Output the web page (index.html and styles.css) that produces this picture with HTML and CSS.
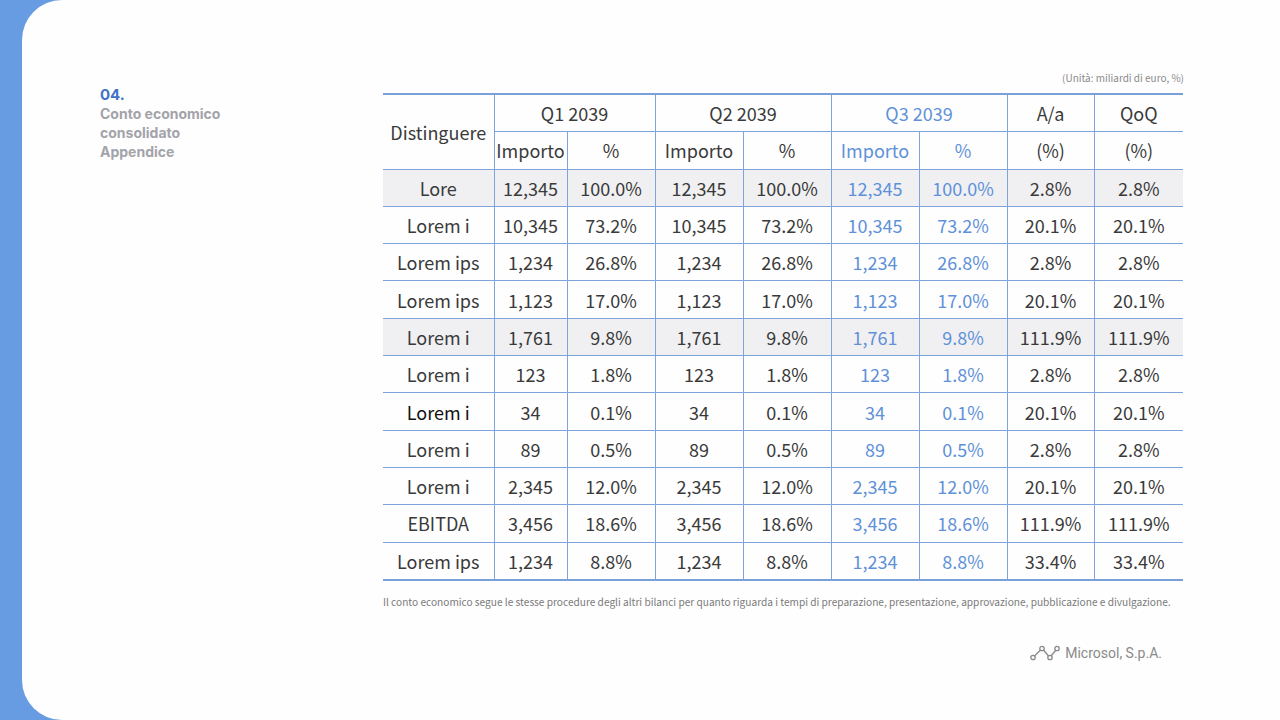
FILE: index.html
```html
<!DOCTYPE html>
<html lang="it">
<head>
<meta charset="utf-8">
<title>Conto economico consolidato</title>
<link rel="stylesheet" href="styles.css">
</head>
<body>
<div class="card">
  <aside class="side">
    <div class="num">04.</div>
    <div class="title">Conto economico consolidato Appendice</div>
  </aside>
  <main class="main">
    <div class="unit">(Unità: miliardi di euro, %)</div>
    <table class="fin">
      <colgroup>
        <col style="width:111px"><col style="width:73px"><col style="width:88px"><col style="width:88px"><col style="width:88px"><col style="width:88px"><col style="width:88px"><col style="width:87px"><col style="width:89px">
      </colgroup>
      <thead>
        <tr>
          <th rowspan="2" class="first">Distinguere</th>
          <th colspan="2">Q1 2039</th>
          <th colspan="2">Q2 2039</th>
          <th colspan="2" class="q3">Q3 2039</th>
          <th>A/a</th>
          <th class="last">QoQ</th>
        </tr>
        <tr>
          <th>Importo</th><th>%</th>
          <th>Importo</th><th>%</th>
          <th class="q3">Importo</th><th class="q3">%</th>
          <th>(%)</th><th class="last">(%)</th>
        </tr>
      </thead>
      <tbody>
        <tr class="gray"><td class="first">Lore</td><td>12,345</td><td>100.0%</td><td>12,345</td><td>100.0%</td><td class="q3">12,345</td><td class="q3">100.0%</td><td>2.8%</td><td class="last">2.8%</td></tr>
        <tr><td class="first">Lorem i</td><td>10,345</td><td>73.2%</td><td>10,345</td><td>73.2%</td><td class="q3">10,345</td><td class="q3">73.2%</td><td>20.1%</td><td class="last">20.1%</td></tr>
        <tr><td class="first">Lorem ips</td><td>1,234</td><td>26.8%</td><td>1,234</td><td>26.8%</td><td class="q3">1,234</td><td class="q3">26.8%</td><td>2.8%</td><td class="last">2.8%</td></tr>
        <tr><td class="first">Lorem ips</td><td>1,123</td><td>17.0%</td><td>1,123</td><td>17.0%</td><td class="q3">1,123</td><td class="q3">17.0%</td><td>20.1%</td><td class="last">20.1%</td></tr>
        <tr class="gray"><td class="first">Lorem i</td><td>1,761</td><td>9.8%</td><td>1,761</td><td>9.8%</td><td class="q3">1,761</td><td class="q3">9.8%</td><td>111.9%</td><td class="last">111.9%</td></tr>
        <tr><td class="first">Lorem i</td><td>123</td><td>1.8%</td><td>123</td><td>1.8%</td><td class="q3">123</td><td class="q3">1.8%</td><td>2.8%</td><td class="last">2.8%</td></tr>
        <tr><td class="first dark">Lorem i</td><td>34</td><td>0.1%</td><td>34</td><td>0.1%</td><td class="q3">34</td><td class="q3">0.1%</td><td>20.1%</td><td class="last">20.1%</td></tr>
        <tr><td class="first">Lorem i</td><td>89</td><td>0.5%</td><td>89</td><td>0.5%</td><td class="q3">89</td><td class="q3">0.5%</td><td>2.8%</td><td class="last">2.8%</td></tr>
        <tr><td class="first">Lorem i</td><td>2,345</td><td>12.0%</td><td>2,345</td><td>12.0%</td><td class="q3">2,345</td><td class="q3">12.0%</td><td>20.1%</td><td class="last">20.1%</td></tr>
        <tr><td class="first">EBITDA</td><td>3,456</td><td>18.6%</td><td>3,456</td><td>18.6%</td><td class="q3">3,456</td><td class="q3">18.6%</td><td>111.9%</td><td class="last">111.9%</td></tr>
        <tr><td class="first">Lorem ips</td><td>1,234</td><td>8.8%</td><td>1,234</td><td>8.8%</td><td class="q3">1,234</td><td class="q3">8.8%</td><td>33.4%</td><td class="last">33.4%</td></tr>
      </tbody>
    </table>
    <p class="note">Il conto economico segue le stesse procedure degli altri bilanci per quanto riguarda i tempi di preparazione, presentazione, approvazione, pubblicazione e divulgazione.</p>
    <div class="brand">
      <svg class="logo" width="30" height="16" viewBox="0 0 30 16" aria-hidden="true">
        <g fill="none" stroke="#8a8a8a" stroke-width="1.3">
          <line x1="4.5" y1="11" x2="10.5" y2="5"/>
          <line x1="13.5" y1="5" x2="18.5" y2="11"/>
          <line x1="21" y1="11" x2="26" y2="5"/>
          <circle cx="3" cy="12.5" r="2.2"/>
          <circle cx="12" cy="3.5" r="2.2"/>
          <circle cx="20" cy="12.5" r="2.2"/>
          <circle cx="27" cy="3.5" r="2.2"/>
        </g>
      </svg>
      <span class="brand-name">Microsol, S.p.A.</span>
    </div>
  </main>
</div>
</body>
</html>
```
FILE: styles.css
```css
html, body {
  margin: 0;
  padding: 0;
}
body {
  width: 1280px;
  height: 720px;
  background: #689ce2;
  overflow: hidden;
}
.card {
  margin-left: 22px;
  height: 720px;
  background: #fefefe;
  border-radius: 40px 0 0 40px;
  display: flex;
  padding: 71px 0 0 78px;
  box-sizing: border-box;
}
.side {
  width: 283px;
  flex: none;
  padding-top: 15px;
  font-family: Inter, "Liberation Sans", sans-serif;
  font-weight: 700;
  font-size: 14px;
  line-height: 19px;
}
.num {
  color: #3f73c6;
  font-size: 15px;
  line-height: 18px;
}
.title {
  color: #a3a3aa;
  width: 130px;
}
.main {
  width: 800px;
  flex: none;
  display: flex;
  flex-direction: column;
  font-family: "Noto Sans CJK JP", "Noto Sans", sans-serif;
}
.unit {
  text-align: right;
  font-size: 10px;
  line-height: 14px;
  color: #8a8a8a;
  margin-bottom: 8px;
  margin-right: -1px;
}
.fin {
  width: 800px;
  table-layout: fixed;
  border-collapse: collapse;
  border-top: 2px solid #79a1d8;
  border-bottom: 2px solid #79a1d8;
  font-size: 18px;
  color: #3a3a3a;
}
.fin th, .fin td {
  height: 36.3px;
  padding: 0;
  text-align: center;
  font-weight: 400;
  border: 1px solid #7ea4d9;
  white-space: nowrap;
  line-height: 20px;
}
.fin .first {
  border-left: none;
}
.fin .last {
  border-right: none;
}
.fin .q3 {
  color: #5f91d9;
}
.fin .dark {
  color: #111;
}
.fin tr.gray td {
  background: #f0f0f2;
}
.note {
  margin: 14px 0 0 0;
  font-size: 10.15px;
  line-height: 14px;
  color: #7a7a7a;
}
.brand {
  margin-top: 36px;
  align-self: flex-end;
  margin-right: 21px;
  display: flex;
  align-items: center;
  gap: 5px;
}
.logo {
  display: block;
}
.brand-name {
  font-family: Roboto, "Liberation Sans", sans-serif;
  font-size: 14px;
  color: #8a8a8a;
}
```
